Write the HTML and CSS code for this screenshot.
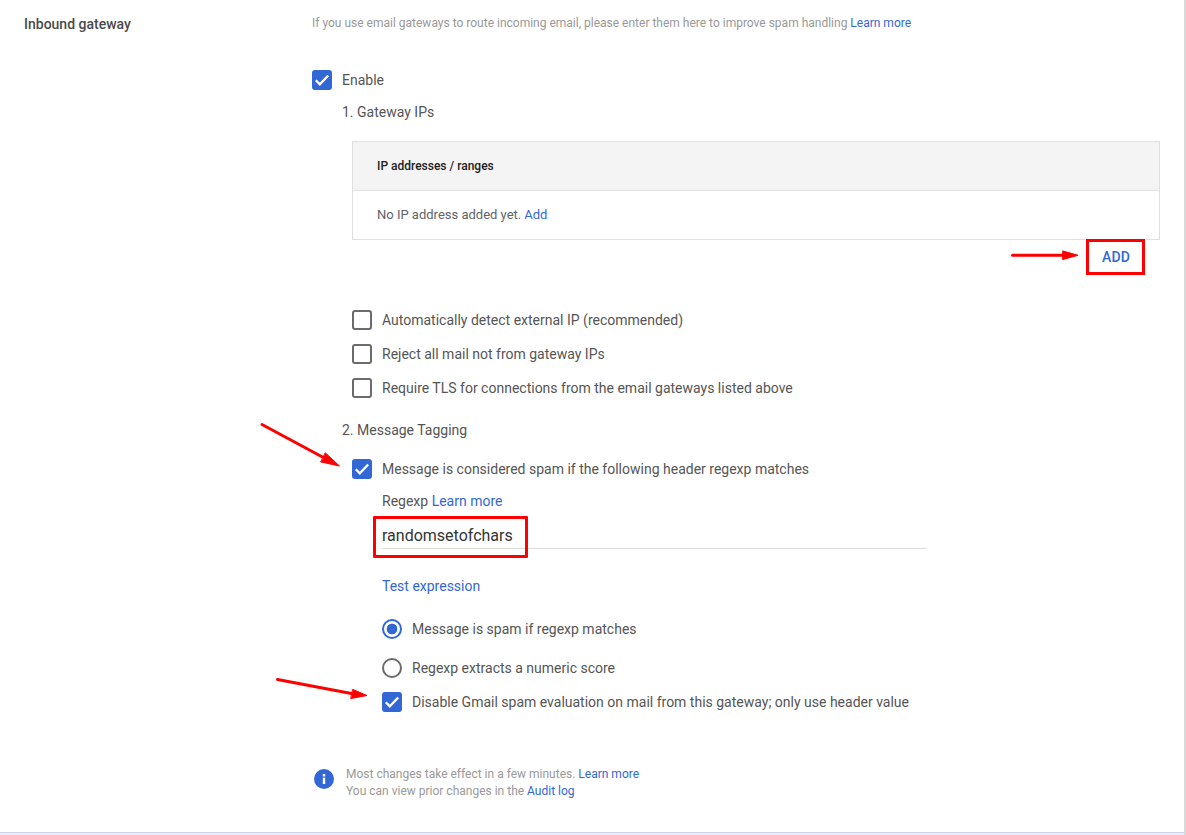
FILE: index.html
```html
<!DOCTYPE html>
<html lang="en">
<head>
<meta charset="utf-8">
<title>Inbound gateway</title>
<link rel="stylesheet" href="styles.css">
</head>
<body>
<div class="page">
  <main class="section">
    <h2 class="section-title">Inbound gateway</h2>
    <div class="content">
      <p class="intro">If you use email gateways to route incoming email, please enter them here to improve spam handling <a href="#">Learn more</a></p>

      <div class="option enable">
        <span class="box checked"><svg viewBox="0 0 20 20"><path d="M3.800 10.300l4 4 8.400-8.800"/></svg></span>
        <span>Enable</span>
      </div>

      <div class="indent">
        <div class="step gateway-step">1. Gateway IPs</div>

        <div class="table-wrap">
          <div class="table">
            <div class="table-head">IP addresses / ranges</div>
            <div class="table-row">No IP address added yet. <a href="#">Add</a></div>
          </div>
          <div class="actions"><button class="add-btn">ADD</button></div>
        </div>

        <div class="checks">
          <div class="option"><span class="box"></span><span>Automatically detect external IP (recommended)</span></div>
          <div class="option"><span class="box"></span><span>Reject all mail not from gateway IPs</span></div>
          <div class="option"><span class="box"></span><span>Require TLS for connections from the email gateways listed above</span></div>
        </div>

        <div class="step tagging-step">2. Message Tagging</div>

        <div class="option spam-option">
          <span class="box checked"><svg viewBox="0 0 20 20"><path d="M3.800 10.300l4 4 8.400-8.800"/></svg></span>
          <span>Message is considered spam if the following header regexp matches</span>
        </div>

        <div class="regexp">
          <div class="regexp-label">Regexp <a href="#">Learn more</a></div>
          <div class="field"><span class="field-value">randomsetofchars</span></div>
          <a class="test-link" href="#">Test expression</a>

          <div class="option radio-first"><span class="radio on"></span><span>Message is spam if regexp matches</span></div>
          <div class="option radio-second"><span class="radio"></span><span>Regexp extracts a numeric score</span></div>
          <div class="option disable-option">
            <span class="box checked"><svg viewBox="0 0 20 20"><path d="M3.800 10.300l4 4 8.400-8.800"/></svg></span>
            <span>Disable Gmail spam evaluation on mail from this gateway; only use header value</span>
          </div>
        </div>
      </div>

      <div class="notice">
        <svg class="info" viewBox="0 0 20 20"><circle cx="10" cy="10" r="10" fill="#3367d6"/><rect x="8.800" y="8.600" width="2.400" height="6.400" fill="#fff"/><rect x="8.800" y="5" width="2.400" height="2.400" fill="#fff"/></svg>
        <div class="notice-text">
          <div>Most changes take effect in a few minutes. <a href="#">Learn more</a></div>
          <div>You can view prior changes in the <a href="#">Audit log</a></div>
        </div>
      </div>
    </div>
  </main>
  <div class="page-foot"></div>

  <svg class="arrows" viewBox="0 0 1186 835" aria-hidden="true">
    <g fill="#f00" stroke="#f00" stroke-linecap="round">
      <path d="M1012.500 255.300H1066" fill="none" stroke-width="3"/>
      <path d="M1063 251l15 4.300-15 4.200z" stroke-width="1"/>
      <path d="M262 424.500L328 460" fill="none" stroke-width="3"/>
      <path d="M325.500 453l14 13-18.500-4z" stroke-width="1"/>
      <path d="M277.500 679.500L354 694" fill="none" stroke-width="3"/>
      <path d="M353 689.500l14 6-16 3z" stroke-width="1"/>
    </g>
  </svg>
</div>
</body>
</html>
```

FILE: styles.css
```css
* { box-sizing: border-box; }

html, body {
  margin: 0;
  padding: 0;
  height: 835px;
  overflow: hidden;
  background: #fff;
}

body {
  font-family: Roboto, "Liberation Sans", sans-serif;
  font-size: 14px;
  line-height: 20px;
  color: #5f6368;
}

a {
  color: #3367d6;
  text-decoration: none;
}

.page {
  position: relative;
  width: 1186px;
  height: 835px;
  display: flex;
  flex-direction: column;
  border-right: 2px solid #d9d9d9;
}

.section {
  flex: 1;
  display: flex;
  min-height: 0;
}

.section-title {
  width: 312px;
  margin: 0;
  padding: 14px 0 0 24px;
  font-size: 14px;
  font-weight: 500;
  line-height: 20px;
  color: #4a4a4a;
}

.content {
  flex: 1;
  padding-top: 14px;
  min-width: 0;
}

.intro {
  margin: 0;
  font-size: 12px;
  line-height: 18px;
  color: #999;
}

.option {
  display: flex;
  align-items: center;
  gap: 10px;
  height: 20px;
  color: #555;
}

.enable { margin-top: 38px; }

.indent { padding-left: 30px; }

.box {
  flex: none;
  width: 20px;
  height: 20px;
  border: 2px solid #6b6b6b;
  border-radius: 3px;
  background: #fff;
}

.box.checked {
  border: 0;
  background: #3367d6;
}

.box svg {
  display: block;
  width: 20px;
  height: 20px;
  fill: none;
  stroke: #fff;
  stroke-width: 2.300;
}

.radio {
  flex: none;
  width: 20px;
  height: 20px;
  border: 2px solid #6b6b6b;
  border-radius: 50%;
}

.radio.on {
  border-color: #3367d6;
  background: radial-gradient(circle, #3367d6 0, #3367d6 5px, #fff 5.700px);
}

.step { color: #555; }

.gateway-step { margin-top: 12px; }

.table-wrap {
  margin: 19px 24px 0 10px;
}

.table {
  border: 1px solid #e0e0e0;
}

.table-head {
  height: 49px;
  padding-left: 24px;
  display: flex;
  align-items: center;
  background: #f4f4f4;
  border-bottom: 1px solid #e0e0e0;
  font-size: 12px;
  font-weight: 500;
  color: #212121;
}

.table-row {
  height: 48px;
  padding-left: 24px;
  display: flex;
  align-items: center;
  gap: 3px;
  font-size: 13px;
  color: #5f6368;
}

.actions {
  display: flex;
  justify-content: flex-end;
  padding-right: 15px;
  margin-top: -1px;
}

.add-btn {
  width: 59px;
  height: 36px;
  padding: 0 0 0 1px;
  border: 3px solid #f00;
  background: #fff;
  color: #3367d6;
  font: 500 14px/20px Roboto, "Liberation Sans", sans-serif;
  letter-spacing: 0.2px;
}

.checks {
  display: flex;
  flex-direction: column;
  gap: 14px;
  margin: 35px 0 0 10px;
}

.tagging-step { margin-top: 22px; }

.spam-option { margin: 19px 0 0 10px; }

.regexp { padding-left: 40px; }

.regexp-label {
  margin-top: 12px;
  color: #555;
}

.field {
  width: 545px;
  height: 32px;
  margin-top: 6px;
  border-bottom: 1px solid #dcdcdc;
}

.field-value {
  position: relative;
  display: inline-block;
  font-size: 16px;
  line-height: 24px;
  color: #333;
  margin-top: 7px;
}

.field-value::after {
  content: "";
  position: absolute;
  left: -9px;
  right: -15px;
  top: -8px;
  height: 36px;
  border: 3px solid #f00;
  border-radius: 1px;
}

.test-link {
  display: block;
  margin-top: 27px;
}

.radio-first { margin-top: 23px; }
.radio-second { margin-top: 19px; }
.disable-option { margin-top: 14px; }

.notice {
  display: flex;
  align-items: flex-start;
  gap: 12px;
  margin: 54px 0 0 2px;
}

.info {
  flex: none;
  width: 20px;
  height: 20px;
  margin-top: 3px;
}

.notice-text {
  font-size: 12px;
  line-height: 17px;
  color: #999;
}

.page-foot {
  flex: none;
  height: 3px;
  border-top: 1px solid #ccd4e6;
  background: #e8eef9;
}

.arrows {
  position: absolute;
  left: 0;
  top: 0;
  width: 1186px;
  height: 835px;
  pointer-events: none;
}
```
